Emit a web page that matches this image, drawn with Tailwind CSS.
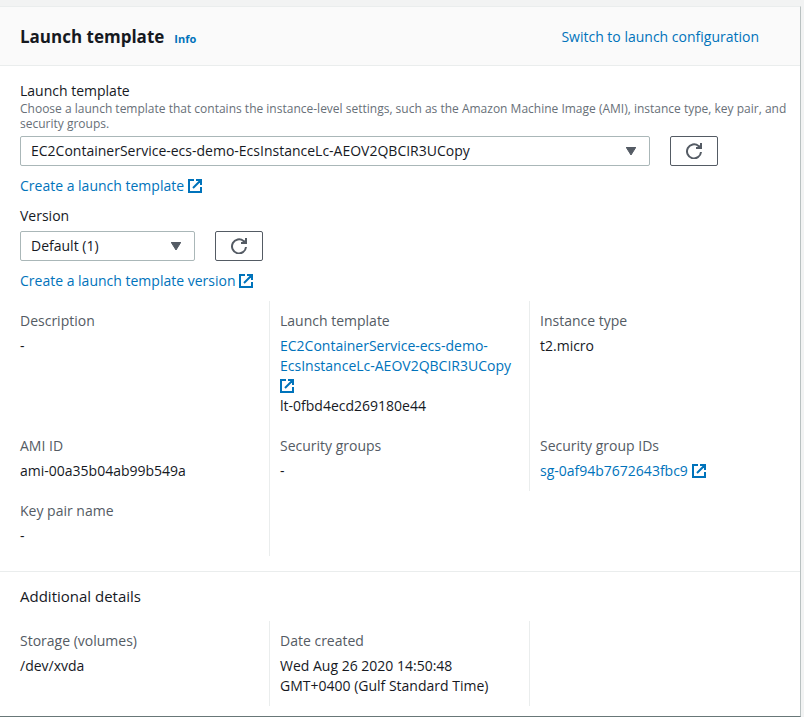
<!DOCTYPE html>
<html lang="en">
<head>
<meta charset="utf-8">
<meta name="viewport" content="width=device-width, initial-scale=1">
<title>Launch template</title>
<script src="https://cdn.jsdelivr.net/npm/@tailwindcss/browser@4"></script>
</head>
<body class="min-h-screen bg-[#f2f3f3] pt-[6px] pr-[3px] font-['Open_Sans','Noto_Sans',sans-serif] text-[14px] leading-5 text-[#16191f]">
<svg class="hidden" aria-hidden="true">
  <symbol id="external" viewBox="0 0 14 14">
    <path d="M6 1H1v12h12V8M8 1h5v5M13 1 5 9" fill="none" stroke="currentColor" stroke-width="2"/>
  </symbol>
  <symbol id="refresh" viewBox="0 0 16 16">
    <path d="M15 9A7 7 0 1 1 12.5 3L14 5" fill="none" stroke="currentColor" stroke-width="2"/>
    <path d="M10 4h4V0h2v6h-6z" fill="currentColor"/>
    <path d="M11 5 14 2v3z" fill="currentColor"/>
  </symbol>
  <symbol id="caret" viewBox="0 0 10 8">
    <path d="M0 0h10L5 8z" fill="currentColor" stroke="currentColor" stroke-linejoin="round"/>
  </symbol>
</svg>
<main class="border-t border-r border-b border-t-[#eaeded] border-r-[#b9c1c1] border-b-[#687778] bg-white">
  <header class="flex items-center justify-between border-b border-[#eaeded] bg-[#fafafa] px-5 pt-[15px] pb-[13px]">
    <div class="flex items-baseline gap-[10px]">
      <h1 class="text-[17px] leading-[30px] font-bold">Launch template</h1>
      <a href="#" class="text-[11px] font-bold text-[#0073bb]">Info</a>
    </div>
    <a href="#" class="mr-[21px] text-[#0073bb]">Switch to launch configuration</a>
  </header>

  <section class="px-5 pt-[15px]">
    <label for="template" class="block">Launch template</label>
    <p id="template-hint" class="-mr-[10px] text-[12px] leading-[15px] text-[#687078]">Choose a launch template that contains the instance-level settings, such as the Amazon Machine Image (AMI), instance type, key pair, and security groups.</p>
    <div class="mt-[5px] flex max-w-[698px] gap-5">
      <div class="relative flex-1">
        <select id="template" aria-describedby="template-hint" class="h-[30px] w-full appearance-none rounded-[2px] border border-[#aab7b8] bg-white pr-8 pl-[10px]">
          <option>EC2ContainerService-ecs-demo-EcsInstanceLc-AEOV2QBCIR3UCopy</option>
        </select>
        <svg class="pointer-events-none absolute top-[11px] right-[14px] h-2 w-[10px] overflow-visible text-[#545b64]"><use href="#caret"/></svg>
      </div>
      <button type="button" aria-label="Refresh launch templates" class="flex h-[30px] w-12 items-center justify-center rounded-[2px] border border-[#545b64] bg-white text-[#545b64]"><svg class="size-4"><use href="#refresh"/></svg></button>
    </div>
    <a href="#" class="mt-[10px] flex items-center gap-1 text-[#0073bb]">Create a launch template <svg class="size-[14px]"><use href="#external"/></svg></a>

    <label for="version" class="mt-[10px] block">Version</label>
    <div class="mt-[5px] flex gap-5">
      <div class="relative w-[175px]">
        <select id="version" class="h-[30px] w-full appearance-none rounded-[2px] border border-[#aab7b8] bg-white pr-8 pl-[10px]">
          <option>Default (1)</option>
        </select>
        <svg class="pointer-events-none absolute top-[11px] right-[14px] h-2 w-[10px] overflow-visible text-[#545b64]"><use href="#caret"/></svg>
      </div>
      <button type="button" aria-label="Refresh versions" class="flex h-[30px] w-12 items-center justify-center rounded-[2px] border border-[#545b64] bg-white text-[#545b64]"><svg class="size-4"><use href="#refresh"/></svg></button>
    </div>
    <a href="#" class="mt-[10px] flex items-center gap-1 text-[#0073bb]">Create a launch template version <svg class="size-[14px]"><use href="#external"/></svg></a>
  </section>

  <dl class="mx-[10px] mt-[10px] grid grid-cols-3">
    <div class="border-r border-[#eaeded] p-[10px]">
      <dt class="text-[#545b64]">Description</dt>
      <dd class="mt-[5px]">-</dd>
    </div>
    <div class="border-r border-[#eaeded] p-[10px]">
      <dt class="text-[#545b64]">Launch template</dt>
      <dd class="mt-[5px]"><a href="#" class="text-[#0073bb]">EC2ContainerService-ecs-demo-EcsInstanceLc-AEOV2QBCIR3UCopy <svg class="inline-block size-[14px] align-[-2px]"><use href="#external"/></svg></a><br>lt-0fbd4ecd269180e44</dd>
    </div>
    <div class="p-[10px]">
      <dt class="text-[#545b64]">Instance type</dt>
      <dd class="mt-[5px]">t2.micro</dd>
    </div>
    <div class="border-r border-[#eaeded] p-[10px]">
      <dt class="text-[#545b64]">AMI ID</dt>
      <dd class="mt-[5px]">ami-00a35b04ab99b549a</dd>
    </div>
    <div class="border-r border-[#eaeded] p-[10px]">
      <dt class="text-[#545b64]">Security groups</dt>
      <dd class="mt-[5px]">-</dd>
    </div>
    <div class="p-[10px]">
      <dt class="text-[#545b64]">Security group IDs</dt>
      <dd class="mt-[5px]"><a href="#" class="flex items-center gap-1 text-[#0073bb]">sg-0af94b7672643fbc9 <svg class="size-[14px]"><use href="#external"/></svg></a></dd>
    </div>
    <div class="border-r border-[#eaeded] p-[10px]">
      <dt class="text-[#545b64]">Key pair name</dt>
      <dd class="mt-[5px]">-</dd>
    </div>
  </dl>

  <section class="mt-[15px] border-t border-[#eaeded] pt-[14px] pb-[10px]">
    <h2 class="px-5 text-[15px]">Additional details</h2>
    <dl class="mx-[10px] mt-[15px] grid grid-cols-3">
      <div class="border-r border-[#eaeded] p-[10px]">
        <dt class="text-[#545b64]">Storage (volumes)</dt>
        <dd class="mt-[5px]">/dev/xvda</dd>
      </div>
      <div class="border-r border-[#eaeded] p-[10px]">
        <dt class="text-[#545b64]">Date created</dt>
        <dd class="mt-[5px]">Wed Aug 26 2020 14:50:48 GMT+0400 (Gulf Standard Time)</dd>
      </div>
    </dl>
  </section>
</main>
</body>
</html>
